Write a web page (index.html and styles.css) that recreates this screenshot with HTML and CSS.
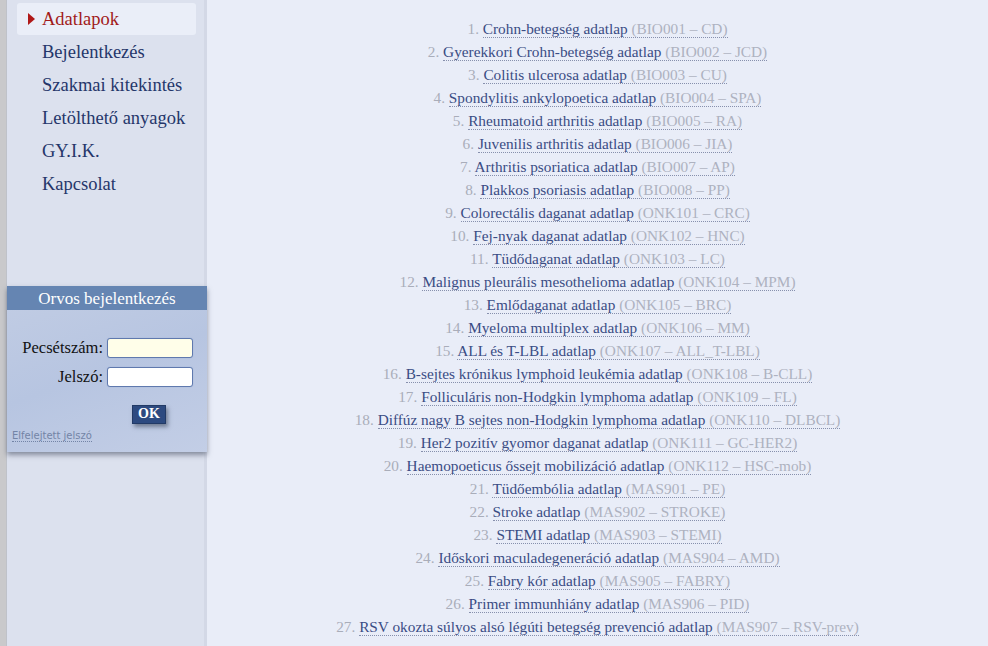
FILE: index.html
```html
<!DOCTYPE html>
<html lang="hu">
<head>
    <meta charset="UTF-8">
    <title>Adatlapok</title>
    <link rel="stylesheet" href="styles.css">
</head>
<body>
    <div class="page">
        <div class="strip"></div>
        <div class="sidebar">
            <ul class="menu">
                <li class="active"><a href="#"><span class="arrow"></span>Adatlapok</a></li>
                <li><a href="#">Bejelentkezés</a></li>
                <li><a href="#">Szakmai kitekintés</a></li>
                <li><a href="#">Letölthető anyagok</a></li>
                <li><a href="#">GY.I.K.</a></li>
                <li><a href="#">Kapcsolat</a></li>
            </ul>
            <div class="login">
                <div class="login-head">Orvos bejelentkezés</div>
                <form class="login-form" action="">
                    <div class="row">
                        <label for="stamp">Pecsétszám:</label>
                        <input type="text" id="stamp" class="filled">
                    </div>
                    <div class="row">
                        <label for="pass">Jelszó:</label>
                        <input type="password" id="pass">
                    </div>
                    <div class="submit-row">
                        <button type="button">OK</button>
                    </div>
                    <a href="#" class="forgot">Elfelejtett jelszó</a>
                </form>
            </div>
        </div>
        <div class="main">
            <ol class="sheets">
                <li><span class="num">1.</span> <span class="entry"><a href="#">Crohn-betegség adatlap</a> <span class="code">(BIO001 – CD)</span></span></li>
                <li><span class="num">2.</span> <span class="entry"><a href="#">Gyerekkori Crohn-betegség adatlap</a> <span class="code">(BIO002 – JCD)</span></span></li>
                <li><span class="num">3.</span> <span class="entry"><a href="#">Colitis ulcerosa adatlap</a> <span class="code">(BIO003 – CU)</span></span></li>
                <li><span class="num">4.</span> <span class="entry"><a href="#">Spondylitis ankylopoetica adatlap</a> <span class="code">(BIO004 – SPA)</span></span></li>
                <li><span class="num">5.</span> <span class="entry"><a href="#">Rheumatoid arthritis adatlap</a> <span class="code">(BIO005 – RA)</span></span></li>
                <li><span class="num">6.</span> <span class="entry"><a href="#">Juvenilis arthritis adatlap</a> <span class="code">(BIO006 – JIA)</span></span></li>
                <li><span class="num">7.</span> <span class="entry"><a href="#">Arthritis psoriatica adatlap</a> <span class="code">(BIO007 – AP)</span></span></li>
                <li><span class="num">8.</span> <span class="entry"><a href="#">Plakkos psoriasis adatlap</a> <span class="code">(BIO008 – PP)</span></span></li>
                <li><span class="num">9.</span> <span class="entry"><a href="#">Colorectális daganat adatlap</a> <span class="code">(ONK101 – CRC)</span></span></li>
                <li><span class="num">10.</span> <span class="entry"><a href="#">Fej-nyak daganat adatlap</a> <span class="code">(ONK102 – HNC)</span></span></li>
                <li><span class="num">11.</span> <span class="entry"><a href="#">Tüdődaganat adatlap</a> <span class="code">(ONK103 – LC)</span></span></li>
                <li><span class="num">12.</span> <span class="entry"><a href="#">Malignus pleurális mesothelioma adatlap</a> <span class="code">(ONK104 – MPM)</span></span></li>
                <li><span class="num">13.</span> <span class="entry"><a href="#">Emlődaganat adatlap</a> <span class="code">(ONK105 – BRC)</span></span></li>
                <li><span class="num">14.</span> <span class="entry"><a href="#">Myeloma multiplex adatlap</a> <span class="code">(ONK106 – MM)</span></span></li>
                <li><span class="num">15.</span> <span class="entry"><a href="#">ALL és T-LBL adatlap</a> <span class="code">(ONK107 – ALL_T-LBL)</span></span></li>
                <li><span class="num">16.</span> <span class="entry"><a href="#">B-sejtes krónikus lymphoid leukémia adatlap</a> <span class="code">(ONK108 – B-CLL)</span></span></li>
                <li><span class="num">17.</span> <span class="entry"><a href="#">Folliculáris non-Hodgkin lymphoma adatlap</a> <span class="code">(ONK109 – FL)</span></span></li>
                <li><span class="num">18.</span> <span class="entry"><a href="#">Diffúz nagy B sejtes non-Hodgkin lymphoma adatlap</a> <span class="code">(ONK110 – DLBCL)</span></span></li>
                <li><span class="num">19.</span> <span class="entry"><a href="#">Her2 pozitív gyomor daganat adatlap</a> <span class="code">(ONK111 – GC-HER2)</span></span></li>
                <li><span class="num">20.</span> <span class="entry"><a href="#">Haemopoeticus őssejt mobilizáció adatlap</a> <span class="code">(ONK112 – HSC-mob)</span></span></li>
                <li><span class="num">21.</span> <span class="entry"><a href="#">Tüdőembólia adatlap</a> <span class="code">(MAS901 – PE)</span></span></li>
                <li><span class="num">22.</span> <span class="entry"><a href="#">Stroke adatlap</a> <span class="code">(MAS902 – STROKE)</span></span></li>
                <li><span class="num">23.</span> <span class="entry"><a href="#">STEMI adatlap</a> <span class="code">(MAS903 – STEMI)</span></span></li>
                <li><span class="num">24.</span> <span class="entry"><a href="#">Időskori maculadegeneráció adatlap</a> <span class="code">(MAS904 – AMD)</span></span></li>
                <li><span class="num">25.</span> <span class="entry"><a href="#">Fabry kór adatlap</a> <span class="code">(MAS905 – FABRY)</span></span></li>
                <li><span class="num">26.</span> <span class="entry"><a href="#">Primer immunhiány adatlap</a> <span class="code">(MAS906 – PID)</span></span></li>
                <li><span class="num">27.</span> <span class="entry"><a href="#">RSV okozta súlyos alsó légúti betegség prevenció adatlap</a> <span class="code">(MAS907 – RSV-prev)</span></span></li>
            </ol>
        </div>
    </div>
</body>
</html>
```

FILE: styles.css
```css
html, body {
    margin: 0;
    padding: 0;
    height: 100%;
}
body {
    font-family: "Liberation Serif", serif;
    background-color: #e9edf8;
    overflow: hidden;
}
.page {
    display: flex;
    height: 646px;
}
.strip {
    width: 6px;
    background-color: #c9c9cb;
    border-right: 1px solid #bfc2c9;
}
.sidebar {
    width: 197px;
    background-color: #dce1ee;
    border-right: 3px solid #d3d8e6;
    box-shadow: 1px 0 0 #c6ccdc;
}
.menu {
    list-style: none;
    margin: 3px 0 0 0;
    padding: 0 8px 0 10px;
}
.menu li {
    height: 33px;
}
.menu a {
    display: flex;
    align-items: center;
    height: 32px;
    padding-left: 25px;
    font-size: 18.5px;
    color: #25366a;
    text-decoration: none;
    border-radius: 3px;
    position: relative;
}
.menu .active a {
    background-color: #eaeef8;
    color: #a11a1a;
}
.arrow {
    position: absolute;
    left: 11px;
    top: 10px;
    width: 0;
    height: 0;
    border-top: 6px solid transparent;
    border-bottom: 6px solid transparent;
    border-left: 7px solid #b01818;
}
.login {
    margin-top: 85px;
    width: 200px;
    background: linear-gradient(160deg, #c2cde4 0%, #b7c5e1 50%, #c3cee6 100%);
    box-shadow: 0 3px 5px rgba(60, 70, 90, 0.55);
    position: relative;
    z-index: 2;
}
.login-head {
    background-color: #6585b2;
    color: #ffffff;
    text-align: center;
    font-size: 17px;
    height: 24px;
    line-height: 25px;
}
.login-form {
    padding: 28px 0 9px 0;
}
.row {
    display: flex;
    align-items: center;
    justify-content: flex-end;
    padding-right: 14px;
    margin-bottom: 9px;
}
.row label {
    font-size: 16.5px;
    color: #111;
    margin-right: 4px;
}
.row input {
    width: 80px;
    height: 16px;
    border: 1px solid #5f79ae;
    border-radius: 3px;
    padding: 1px 2px;
    background-color: #fff;
    box-shadow: 0 0 1px #8aa0cc;
}
.row input.filled {
    background-color: #fffee9;
}
.submit-row {
    padding-left: 125px;
    margin-top: 17px;
}
.submit-row button {
    background-color: #2d4a80;
    color: #fff;
    font-family: "Liberation Serif", serif;
    font-size: 14px;
    font-weight: bold;
    border: 1px solid #223a66;
    width: 34px;
    height: 19px;
    padding: 0;
    box-shadow: 2px 3px 4px rgba(40, 50, 70, 0.5);
    cursor: pointer;
}
.forgot {
    display: inline-block;
    margin: 6px 0 0 5px;
    font-family: "DejaVu Sans", sans-serif;
    font-size: 10px;
    color: #7384a6;
    text-decoration: none;
    border-bottom: 1px dotted #7384a6;
}
.main {
    flex: 1;
    background-color: #e9edf8;
}
.sheets {
    list-style: none;
    margin: 17px 0 0 0;
    padding: 0;
    text-align: center;
    font-size: 15.3px;
    line-height: 23px;
}
.sheets .num {
    color: #a9adba;
}
.sheets .entry {
    border-bottom: 1px dotted #8790ad;
}
.sheets a {
    color: #3a4c84;
    text-decoration: none;
}
.sheets .code {
    color: #aeb2c0;
}
```
